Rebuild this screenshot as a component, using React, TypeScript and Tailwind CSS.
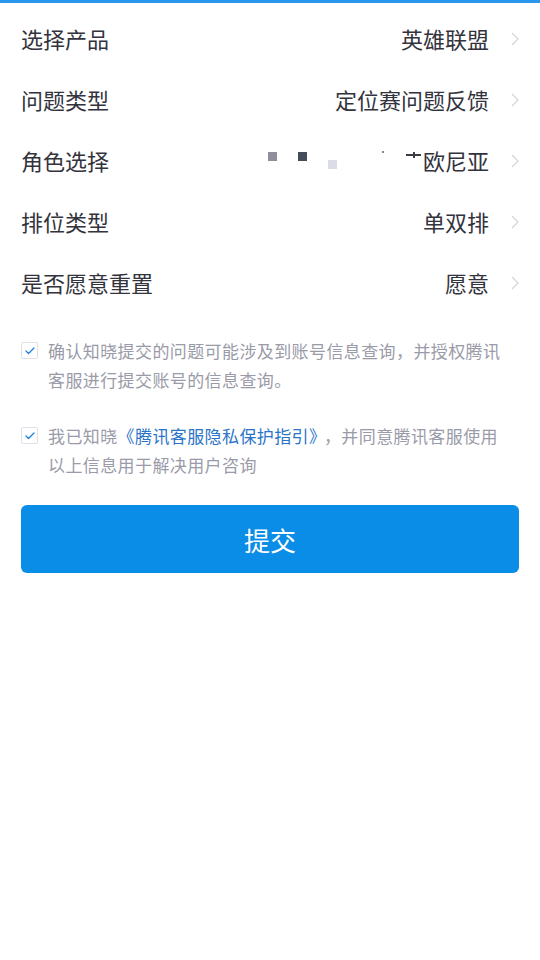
import { Check } from "lucide-react";

const font = {
  fontFamily: '"Noto Sans CJK SC", "Noto Sans", sans-serif',
};

type Row = { label: string; value: React.ReactNode };

function Chevron() {
  return (
    <svg width="8" height="14" viewBox="0 0 8 14" className="ml-[22px] shrink-0">
      <path d="M1 1l6 6-6 6" fill="none" stroke="#d4d4d8" strokeWidth="1.2" />
    </svg>
  );
}

// 角色名被打码，只留下几个色块
function Masked() {
  return (
    <span className="flex items-center">
      <span className="relative h-[22px] w-[155px]">
        <span className="absolute left-0 top-[2px] h-[9px] w-[9px] bg-[#8f8e9b]" />
        <span className="absolute left-[30px] top-[2px] h-[9px] w-[9px] bg-[#464b5a]" />
        <span className="absolute left-[60px] top-[10px] h-[9px] w-[9px] bg-[#dcdbe8]" />
        <span className="absolute left-[114px] top-[1px] h-[2px] w-[2px] bg-[#888]" />
        <span className="absolute left-[138px] top-[4px] h-[2px] w-[15px] bg-[#3a3a44]" />
        <span className="absolute left-[145px] top-[2px] h-[6px] w-[2px] bg-[#3a3a44]" />
      </span>
      <span>欧尼亚</span>
    </span>
  );
}

const rows: Row[] = [
  { label: "选择产品", value: "英雄联盟" },
  { label: "问题类型", value: "定位赛问题反馈" },
  { label: "角色选择", value: <Masked /> },
  { label: "排位类型", value: "单双排" },
  { label: "是否愿意重置", value: "愿意" },
];

function Box() {
  return (
    <span className="mt-[6px] flex h-[17px] w-[17px] shrink-0 items-center justify-center rounded-[2px] border border-[#dfe1ea] bg-white">
      <Check className="h-[12px] w-[12px] text-[#1c7fdc]" strokeWidth={2.5} />
    </span>
  );
}

export default function App() {
  return (
    <div className="min-h-[960px] bg-white text-[#33333d]" style={font}>
      <div className="h-[3px] bg-[#2b96ee]" />
      <div className="px-[21px] pt-[5px]">
        {rows.map((r) => (
          <div key={r.label} className="flex h-[61px] items-center text-[22px]">
            <span className="flex-1">{r.label}</span>
            <span className="flex items-center">{r.value}</span>
            <Chevron />
          </div>
        ))}

        <div className="mt-[23px] flex gap-[10px] pr-[16px] text-[17px] leading-[29px] tracking-[0.4px] text-[#9a9ba8]">
          <Box />
          <p>确认知晓提交的问题可能涉及到账号信息查询，并授权腾讯客服进行提交账号的信息查询。</p>
        </div>
        <div className="mt-[27px] flex gap-[10px] pr-[10px] text-[17px] leading-[29px] tracking-[0.4px] text-[#9a9ba8]">
          <Box />
          <p>
            我已知晓<span className="text-[#2a74c9]">《腾讯客服隐私保护指引》</span>
            <span className="ml-[6px]">，</span>并同意腾讯客服使用以上信息用于解决用户咨询
          </p>
        </div>

        <button className="mt-[26px] flex h-[68px] w-full items-center justify-center rounded-[6px] bg-[#0a8de6] text-[26px] text-white">
          提交
        </button>
      </div>
    </div>
  );
}
